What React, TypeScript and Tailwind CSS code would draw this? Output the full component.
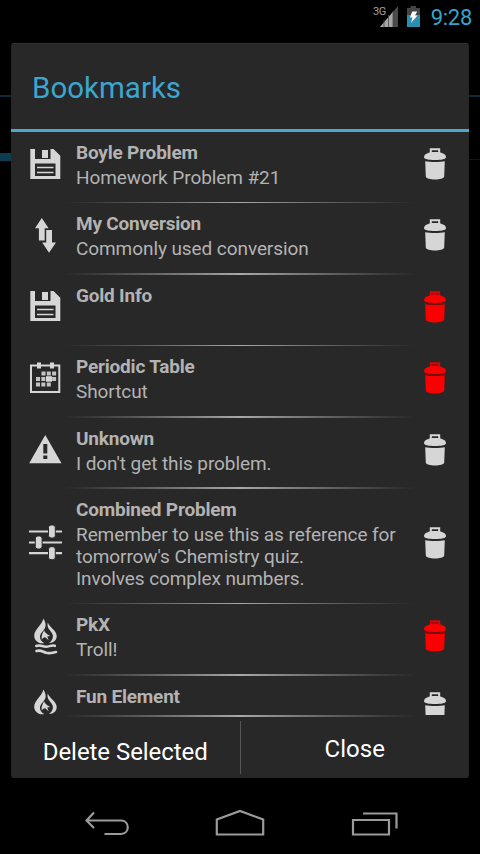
import { useState, type ReactNode } from "react";

type IconName = "save" | "convert" | "table" | "warning" | "sliders" | "element";

type Bookmark = {
  title: string;
  note: string[];
  icon: IconName;
  marked: boolean;
};

const BOOKMARKS: Bookmark[] = [
  { title: "Boyle Problem", note: ["Homework Problem #21"], icon: "save", marked: false },
  { title: "My Conversion", note: ["Commonly used conversion"], icon: "convert", marked: false },
  { title: "Gold Info", note: [], icon: "save", marked: true },
  { title: "Periodic Table", note: ["Shortcut"], icon: "table", marked: true },
  { title: "Unknown", note: ["I don't get this problem."], icon: "warning", marked: false },
  {
    title: "Combined Problem",
    note: ["Remember to use this as reference for", "tomorrow's Chemistry quiz.", "Involves complex numbers."],
    icon: "sliders",
    marked: false,
  },
  { title: "PkX", note: ["Troll!"], icon: "element", marked: true },
  { title: "Fun Element", note: [], icon: "element", marked: false },
];

const ICONS: Record<IconName, ReactNode> = {
  save: (
    <>
      <path fill="#d6d6d6" d="M5.300 4H10v10h15.500V4h3l6.800 6.800V34h-30z" />
      <path fill="#d6d6d6" d="M17 5h6v8h-6z" />
      <path fill="#282828" d="M10 18.500h20.500V31H10z" />
      <path stroke="#d6d6d6" strokeWidth="1.700" d="M12 22.500h16.500M12 27.500h16.500" />
    </>
  ),
  convert: (
    <path
      fill="#d6d6d6"
      d="M16.800 2l6.800 10.200h-3.900v12.300h-5.800V12.200H10zM21.200 14H27v12.500h4L24 36.800l-6.800-10.300h4z"
    />
  ),
  table: (
    <>
      <path fill="none" stroke="#d6d6d6" strokeWidth="2" d="M6 6.500h28.300V33H6z" />
      <path fill="#d6d6d6" d="M12 3.500h4v6h-4zM25 3.500h4v6h-4z" />
      <path
        fill="#c4c4c4"
        d="M16.500 12.500h4v4h-4zM21.800 12.500h4v4h-4zM27.100 12.500h4v4h-4zM11 18h4v4h-4zM16.300 18h4v4h-4zM27.100 18h4v4h-4zM11 23.500h4v4h-4zM16.300 23.500h4v4h-4zM21.800 23.500h4v4h-4z"
      />
      <path fill="#d6d6d6" d="M21 17.200h6v5.500h-6z" />
    </>
  ),
  warning: (
    <>
      <path fill="#d6d6d6" d="M20.300 5L36.500 33.300H4.200z" />
      <path fill="#282828" d="M18.300 14h4v9.500h-4zM18.300 25.500h4v3.500h-4z" />
    </>
  ),
  sliders: (
    <>
      <path stroke="#d6d6d6" strokeWidth="2.200" d="M4 8.500h33M4 19.500h33M4 30.200h33" />
      <g fill="#d6d6d6" stroke="#282828" strokeWidth="1">
        <rect x="23.500" y="2" width="6.800" height="13" rx="2.500" />
        <rect x="10.300" y="13" width="6.800" height="13" rx="2.500" />
        <rect x="23.500" y="23.700" width="6.800" height="13" rx="2.500" />
      </g>
    </>
  ),
  element: (
    <>
      <path
        fill="#d6d6d6"
        d="M18.400 1.500c2 3.500 3 6.500 1.600 9.500-1.500 3.100-5 5.200-5 9 0 2.700 1.600 4.700 4.300 6-5.500 1.200-10.100-2.400-10.100-7.300 0-6.200 7.200-9.700 9.200-17.200z"
      />
      <path
        fill="#d6d6d6"
        d="M22.800 5.500c1.600 4.900 8.900 7.800 8.900 13.400 0 4-3 6.800-7.700 7 3-2 4.700-5.100 3.500-8.600-1.300-3.600-6.300-5.800-4.700-11.800z"
      />
      <path
        fill="#d6d6d6"
        d="M16.800 22.800c-.7-3.400.4-6.600 2.400-9.600.4 2.800 3.600 4 6 5.800l-3 .4 1.500 3.900-3.500-3c-1.800.2-2.800 1-3.400 2.500z"
      />
      <path
        fill="none"
        stroke="#d6d6d6"
        strokeWidth="2.600"
        strokeLinecap="round"
        d="M11.300 29c4-1.800 6 .8 9.500.8s5.500-2 9-1M11.500 34c4-1.500 6.500 1 9.500 1.800 4 1 7-.3 10-.8"
      />
    </>
  ),
};

function TrashIcon({ marked }: { marked: boolean }) {
  const fill = marked ? "#fa0000" : "#d6d6d6";
  return (
    <svg width="26" height="38" viewBox="0 0 26 38" aria-hidden>
      <path
        fill="none"
        stroke={marked ? "#dc0303" : "#d6d6d6"}
        strokeWidth="2"
        d="M8.800 8.500V4.200h8.400v4.300"
      />
      {marked && <path fill="#b80404" d="M9.800 5.200h6.400v3H9.800z" />}
      <path fill={fill} d="M2 12c0-3 4.500-5 11-5s11 2 11 5c0 2.200-4.500 3-11 3s-11-.8-11-3z" />
      <path fill={fill} d="M3.200 16.200c4.500 1.100 15.100 1.100 19.600 0l-.6 15.300c-.2 4-18.200 4-18.400 0z" />
      {marked && (
        <path fill="none" stroke="#8b0808" strokeWidth="1.400" d="M2.500 14.800c4 1.600 17 1.600 21 0" />
      )}
    </svg>
  );
}

function Divider() {
  return (
    <div className="mx-[54px] h-[1.500px] shrink-0 bg-linear-to-r from-[#282828] via-[#a8a8a8] to-[#282828]" />
  );
}

function StatusBar() {
  return (
    <header className="flex h-[43px] items-start justify-end pr-2">
      <span className="mt-[5px] text-[11px] leading-[13px] tracking-[-0.500px] text-[#a0a0a0]">3G</span>
      <svg className="-ml-[7px] mt-[6px]" width="20" height="22" viewBox="0 0 20 22" aria-hidden>
        <path fill="#4a4a4a" d="M19 0v21H1z" />
        <path fill="#a6a6a6" d="M14 5.800V21H1z" />
        <path stroke="#4a4a4a" strokeWidth=".8" d="M5 14v7M9.500 9v12M14 5v16" />
      </svg>
      <svg className="ml-[7px] mt-[6px]" width="15" height="21" viewBox="0 0 15 21" aria-hidden>
        <path fill="#444" d="M4.500 0h5.500v2H14v8H1V2h3.500z" />
        <path fill="#2a8eb0" d="M1 9h13v12H1z" />
        <path fill="#fff" d="M6.200 5.500h5L9 9.500h2.500L5 17l1.500-5.500H4z" />
      </svg>
      <span className="ml-[10px] mt-[4.500px] text-[22px] leading-[26px] tracking-[-0.300px] text-[#35a5cd]">9:28</span>
    </header>
  );
}

function BookmarkRow({ bookmark, onToggle }: { bookmark: Bookmark; onToggle: () => void }) {
  const tall = bookmark.note.length > 1;
  return (
    <li className={`flex shrink-0 flex-col ${tall ? "h-[115.200px]" : "h-[71.400px]"}`}>
      <div className="flex min-h-0 flex-1">
        <div className={`flex w-[65px] shrink-0 pl-[14px] ${tall ? "pt-[34.500px]" : "pt-[12.500px]"}`}>
          <svg width="40" height="40" viewBox="0 0 40 40" aria-hidden>
            {ICONS[bookmark.icon]}
          </svg>
        </div>
        <div className="min-w-0 flex-1 whitespace-nowrap pt-[10px] text-[19px] leading-[22px] text-[#b3b3b3]">
          <p className="font-bold tracking-[-0.200px]">{bookmark.title}</p>
          <div className="mt-[3px] tracking-[-0.080px]">
            {bookmark.note.map((line) => (
              <p key={line}>{line}</p>
            ))}
          </div>
        </div>
        <button
          type="button"
          aria-label={`Mark ${bookmark.title}`}
          aria-pressed={bookmark.marked}
          onClick={onToggle}
          className={`flex w-[47.500px] shrink-0 items-start ${tall ? "pt-[35px]" : "pt-[13px]"}`}
        >
          <TrashIcon marked={bookmark.marked} />
        </button>
      </div>
      <Divider />
    </li>
  );
}

function NavBar() {
  return (
    <nav className="flex h-[76px] items-start justify-center gap-[84px] pt-[29px]">
      <svg width="50" height="34" viewBox="0 0 50 34" fill="none" stroke="#9b9b9b" strokeWidth="2.200" aria-hidden>
        <path d="M13 5.500L5.500 13.500l7.500 7.500M5.500 13.500H40c9 0 9 13.500 0 13.500H23.500" />
      </svg>
      <svg width="50" height="34" viewBox="0 0 50 34" fill="none" stroke="#9b9b9b" strokeWidth="2.200" aria-hidden>
        <path d="M1.800 27.500V12.500L25 4l23.200 8.500v15z" />
      </svg>
      <svg width="50" height="34" viewBox="0 0 50 34" fill="none" stroke="#9b9b9b" strokeWidth="2.200" aria-hidden>
        <path d="M4 13h36v14.500H4zM14 6.500h33.500v15" />
      </svg>
    </nav>
  );
}

export default function App() {
  const [bookmarks, setBookmarks] = useState(BOOKMARKS);

  const toggle = (index: number) =>
    setBookmarks((all) => all.map((b, i) => (i === index ? { ...b, marked: !b.marked } : b)));

  return (
    <div className="flex h-[854px] w-[480px] flex-col overflow-hidden bg-black font-[Roboto,sans-serif]">
      <StatusBar />
      <div className="flex h-[735px]">
        <div className="w-[11px] shrink-0 pt-[52px]">
          <div className="h-[2px] bg-[#0a2d3b]" />
          <div className="mt-[56px] h-[8px] bg-[#0b3d50]" />
        </div>
        <main className="flex min-w-0 flex-1 flex-col overflow-hidden rounded-[3px] border-t border-[#303030] bg-[#282828]">
          <h1 className="h-[85px] shrink-0 pl-[21px] pt-[26px] text-[29.500px] leading-[36px] text-[#3ba6d0]">
            Bookmarks
          </h1>
          <div className="h-[3px] shrink-0 bg-[#4ba9d0]" />
          <ul className="flex h-[583px] shrink-0 flex-col overflow-hidden">
            {bookmarks.map((bookmark, index) => (
              <BookmarkRow key={bookmark.title} bookmark={bookmark} onToggle={() => toggle(index)} />
            ))}
          </ul>
          <Divider />
          <div className="flex flex-1 pb-1 pt-1 text-[24px] leading-[28px] text-white">
            <button type="button" className="flex flex-1 justify-center pt-[17px] tracking-[-0.050px]">
              Delete Selected
            </button>
            <div className="w-px bg-[#555]" />
            <button type="button" className="flex flex-1 justify-center pt-[14px]">
              Close
            </button>
          </div>
        </main>
        <div className="w-[11px] shrink-0 pt-[52px]">
          <div className="h-[2px] bg-[#0a2d3b]" />
          <div className="mt-[62px] h-px bg-[#151515]" />
        </div>
      </div>
      <NavBar />
    </div>
  );
}
